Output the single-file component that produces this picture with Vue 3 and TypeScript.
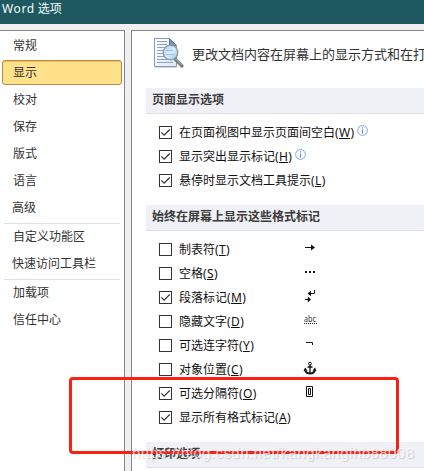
<script setup lang="ts">
interface NavItem {
  label: string
  active?: boolean
  nudge?: boolean
}
interface Option {
  label: string
  key: string
  checked: boolean
  info?: boolean
  mark?: string
}

const navGroups: NavItem[][] = [
  [
    { label: '常规' },
    { label: '显示', active: true },
    { label: '校对' },
    { label: '保存' },
    { label: '版式' },
    { label: '语言' },
    { label: '高级', nudge: true },
  ],
  [{ label: '自定义功能区' }, { label: '快速访问工具栏', nudge: true }],
  [{ label: '加载项' }, { label: '信任中心' }],
]

const pageOptions: Option[] = [
  { label: '在页面视图中显示页面间空白', key: 'W', checked: true, info: true },
  { label: '显示突出显示标记', key: 'H', checked: true, info: true },
  { label: '悬停时显示文档工具提示', key: 'L', checked: true },
]

const markOptions: Option[] = [
  { label: '制表符', key: 'T', checked: false, mark: 'tab' },
  { label: '空格', key: 'S', checked: false, mark: 'space' },
  { label: '段落标记', key: 'M', checked: true, mark: 'para' },
  { label: '隐藏文字', key: 'D', checked: false, mark: 'hidden' },
  { label: '可选连字符', key: 'Y', checked: false, mark: 'hyphen' },
  { label: '对象位置', key: 'C', checked: false, mark: 'anchor' },
  { label: '可选分隔符', key: 'O', checked: true, mark: 'break' },
  { label: '显示所有格式标记', key: 'A', checked: true },
]

const sections = [
  { title: '页面显示选项', options: pageOptions },
  { title: '始终在屏幕上显示这些格式标记', options: markOptions },
  { title: '打印选项', options: [] as Option[] },
]
</script>

<template>
  <div class="window">
    <header class="titlebar"><span class="app-name">Word</span> 选项</header>
    <div class="body">
      <nav class="sidebar">
        <div v-for="(group, g) in navGroups" :key="g" class="group">
          <div
            v-for="item in group"
            :key="item.label"
            class="nav-item"
            :class="{ active: item.active, nudge: item.nudge }"
          >
            {{ item.label }}
          </div>
        </div>
      </nav>
      <main class="content">
        <div class="intro">
          <svg class="doc-icon" width="32" height="34" viewBox="0 0 32 34">
            <defs>
              <linearGradient id="page" x1="0" y1="0" x2="1" y2="1">
                <stop offset="0" stop-color="#fff" />
                <stop offset="1" stop-color="#dfe8f5" />
              </linearGradient>
              <linearGradient id="lens" x1="0" y1="0" x2="1" y2="1">
                <stop offset="0" stop-color="#a9cdf1" />
                <stop offset=".5" stop-color="#d8efff" />
                <stop offset="1" stop-color="#8fc4ef" />
              </linearGradient>
            </defs>
            <path d="M2 30.500H24" stroke="#d5d8de" />
            <path d="M1.500 1.500H16.500L23.500 8.500V29.500H1.500Z" fill="url(#page)" stroke="#8499bf" />
            <path d="M16.500 1.500V8.500H23.500Z" fill="#7892bd" stroke="#5f79a8" />
            <path
              d="M4 4.500H14M4 7.500H14M4 10.500H12M4 13.500H10M4 16.500H10M4 19.500H12M4 22.500H20M4 25.500H20"
              stroke="#8ca2cb"
            />
            <path d="M22.500 22.500L29 29" stroke="#787a7d" stroke-width="3.200" stroke-linecap="round" />
            <path d="M22.500 22L28.500 28" stroke="#b8babd" stroke-width="1" />
            <circle cx="17.500" cy="15.500" r="7.300" fill="url(#lens)" stroke="#90969e" stroke-width="1.300" />
            <path d="M13 13.500H20M12.500 17.500H21" stroke="#9ebee5" />
          </svg>
          <span class="intro-text">更改文档内容在屏幕上的显示方式和在打</span>
        </div>
        <section v-for="section in sections" :key="section.title" class="section">
          <h2>{{ section.title }}</h2>
          <div class="options">
            <div v-for="opt in section.options" :key="opt.key" class="option">
              <span class="box">
                <svg v-if="opt.checked" width="11" height="11" viewBox="0 0 11 11">
                  <path d="M1.300 5.300L4.100 8.100L9.700 2.500" fill="none" stroke="#333" stroke-width="1.200" />
                </svg>
              </span>
              <span class="label">{{ opt.label }}(<u>{{ opt.key }}</u>)</span>
              <svg v-if="opt.info" class="info" width="11" height="11" viewBox="0 0 11 11">
                <circle cx="5.500" cy="5.500" r="4.900" fill="#f8fbff" stroke="#86a9d8" />
                <path d="M5.500 2.300V3.500M5.500 4.500V8.500" stroke="#5684c4" />
              </svg>
              <span v-if="opt.mark" class="mark">
                <svg width="14" height="16" viewBox="0 0 14 16">
                  <g v-if="opt.mark === 'tab'">
                    <path d="M2 6.500H9" stroke="#111" />
                    <path d="M8 3.500L12 6.500L8 9.500Z" fill="#111" />
                  </g>
                  <path v-else-if="opt.mark === 'space'" d="M2 6h2v2H2zM6 6h2v2H6zM10 6h2v2h-2z" fill="#111" />
                  <g v-else-if="opt.mark === 'para'">
                    <path d="M11.500 1V4.500H7M2 10.500H6" fill="none" stroke="#111" />
                    <path d="M4.500 4.500L8 1.800V7.200ZM8 10.500L4.800 7.500V13.500Z" fill="#111" />
                  </g>
                  <g v-else-if="opt.mark === 'hidden'">
                    <text class="abc" x="1" y="9" textLength="12" lengthAdjust="spacingAndGlyphs">abc</text>
                    <path d="M1 10.500H14" stroke="#222" stroke-dasharray="1 1" />
                  </g>
                  <path v-else-if="opt.mark === 'hyphen'" d="M3 5.500H9.500V8" fill="none" stroke="#111" />
                  <g v-else-if="opt.mark === 'anchor'" fill="none" stroke="#111">
                    <circle cx="7" cy="2.700" r="1.400" />
                    <path d="M7 4V13M4.500 6H9.500" stroke-width="1.300" />
                    <path d="M2 9Q3 12.500 7 12.500Q11 12.500 12 9" stroke-width="2" />
                    <path d="M.5 10L2 6.500L4.500 9.500ZM13.500 10L12 6.500L9.500 9.500Z" fill="#111" stroke="none" />
                  </g>
                  <path v-else d="M3.500 1.500H9.500V11.500H3.500ZM5.500 3.500H7.500V9.500H5.500Z" fill="#fff" stroke="#111" />
                </svg>
              </span>
            </div>
          </div>
        </section>
      </main>
    </div>
    <div class="highlight"></div>
    <svg class="watermark" width="292" height="24" viewBox="0 0 292 24">
      <text x="1" y="17" textLength="282">https://blog.csdn.net/kangkanglhb88008</text>
    </svg>
  </div>
</template>

<style>
body {
  overflow: hidden;
}
</style>

<style scoped>
.window {
  position: relative;
  display: flex;
  flex-direction: column;
  width: 424px;
  height: 471px;
  overflow: hidden;
  background: #f0f0f0;
  color: #333;
  font: 12px/16px 'Noto Sans', 'Noto Sans CJK SC', sans-serif;
  white-space: nowrap;
}
.titlebar {
  flex: none;
  height: 24px;
  box-sizing: border-box;
  padding-left: 2px;
  background: #1e5962;
  color: #f4f8f8;
  line-height: 17px;
}
.app-name {
  letter-spacing: 0.6px;
}
.body {
  display: flex;
  flex: 1;
  min-height: 0;
  gap: 6px;
  padding-top: 6px;
}
.sidebar {
  box-sizing: border-box;
  flex: none;
  width: 125px;
  padding: 2px 2px 0;
  border-top: 1px solid #83868e;
  border-right: 1px solid #83868e;
  background: #fff;
}
.group + .group {
  margin: 1px 2px 0;
  border-top: 1px solid #dfe0e7;
}
.group + .group .nav-item {
  padding-left: 9px;
}
.group + .group .nav-item.nudge {
  padding-left: 8px;
}
.nav-item {
  box-sizing: border-box;
  height: 27px;
  padding-left: 11px;
  line-height: 26px;
}
.nav-item.nudge {
  padding-left: 10px;
}
.nav-item.active {
  height: 25px;
  margin: 0 0 2px;
  padding-left: 10px;
  border: 1px solid #c6873c;
  border-radius: 3px;
  background: #ffe28a;
  box-shadow: inset 0 1px 1px #eebd63;
  line-height: 24px;
}
.content {
  flex: 1;
  min-width: 0;
  border-top: 1px solid #83868e;
  border-left: 1px solid #83868e;
  background: #fff;
  overflow: hidden;
}
.intro {
  display: flex;
  height: 57px;
  padding-left: 21px;
}
.doc-icon {
  flex: none;
  margin-top: 6px;
}
.intro-text {
  margin: 15px 0 0 7px;
  font-size: 13px;
}
.section {
  margin-left: 14px;
}
h2 {
  box-sizing: border-box;
  height: 26px;
  margin: 0;
  padding-left: 6px;
  border-bottom: 1px solid #dedfe6;
  background: #f0f1f6;
  color: #3b3b3b;
  font-size: 12px;
  font-weight: bold;
  line-height: 24px;
}
.options {
  padding: 6px 0 13px 13px;
}
.option {
  position: relative;
  display: flex;
  align-items: center;
  height: 24px;
  padding-top: 1px;
  box-sizing: border-box;
  color: #111;
}
.box {
  display: flex;
  box-sizing: border-box;
  width: 13px;
  height: 13px;
  margin-right: 7px;
  border: 1px solid #333;
  background: #fff;
}
.label u {
  padding: 0 0.4px;
  text-underline-offset: 1px;
}
.info {
  margin: -5px 0 0 3px;
}
.mark {
  position: absolute;
  left: 144px;
  top: 4px;
  display: flex;
}
.abc {
  font: 9px 'Noto Sans', sans-serif;
  fill: #333;
}
.highlight {
  position: absolute;
  left: 69px;
  top: 377px;
  box-sizing: border-box;
  width: 330px;
  height: 77px;
  border: 3px solid #fb2012;
  border-radius: 4px;
}
.watermark {
  position: absolute;
  left: 131px;
  top: 441px;
  font: 15px 'Liberation Sans', sans-serif;
  fill: rgba(255, 255, 255, 0.7);
  text-shadow: 1px 1px 1px rgba(110, 110, 120, 0.4);
}
</style>
